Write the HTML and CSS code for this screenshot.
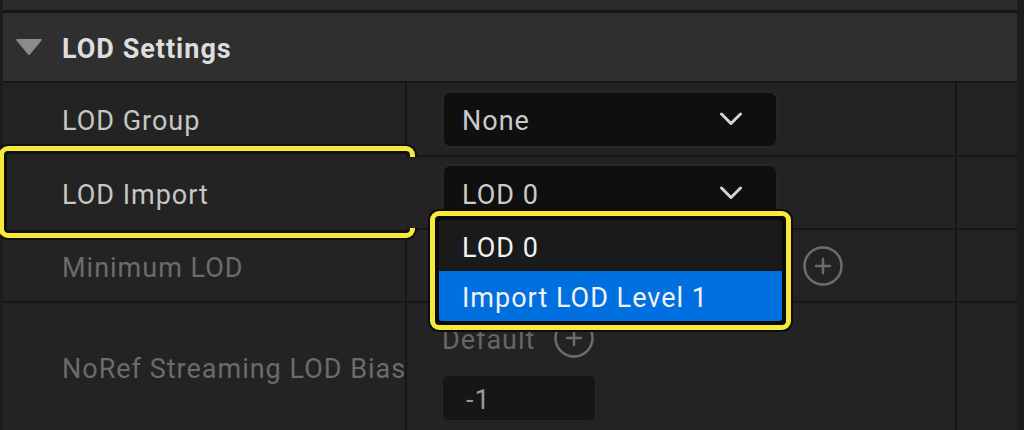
FILE: index.html
```html
<!DOCTYPE html>
<html lang="en">
<head>
	<meta charset="UTF-8">
	<meta name="viewport" content="width=device-width, initial-scale=1.0">
	<title>LOD Settings</title>
	<link rel="stylesheet" href="styles.css">
</head>
<body>
	<div class="panel">
		<div class="topbar"></div>
		<div class="section-head">
			<svg class="caret" width="28" height="18" viewBox="0 0 28 18"><path d="M2 1 H26 Q27.5 1 26.5 2.5 L15 16.5 Q14 17.5 13 16.5 L1.5 2.5 Q0.5 1 2 1 Z" fill="#8b8b8b"/></svg>
			<h2>LOD Settings</h2>
		</div>

		<div class="grid">
			<div class="cell label">LOD Group</div>
			<div class="cell value">
				<div class="combo">
					<span>None</span>
					<svg class="chevron" width="24" height="14" viewBox="0 0 24 14"><polyline points="2.5,2 12,11.5 21.5,2" fill="none" stroke="#d4d4d4" stroke-width="3" stroke-linecap="round" stroke-linejoin="round"/></svg>
				</div>
			</div>
			<div class="cell"></div>

			<div class="cell label marked"><span class="text">LOD Import</span></div>
			<div class="cell value popup-anchor">
				<div class="combo">
					<span>LOD 0</span>
					<svg class="chevron" width="24" height="14" viewBox="0 0 24 14"><polyline points="2.5,2 12,11.5 21.5,2" fill="none" stroke="#d4d4d4" stroke-width="3" stroke-linecap="round" stroke-linejoin="round"/></svg>
				</div>
				<ul class="menu">
					<li>LOD 0</li>
					<li class="selected">Import LOD Level 1</li>
				</ul>
			</div>
			<div class="cell"></div>

			<div class="cell label dim">Minimum LOD</div>
			<div class="cell value">
				<div class="combo"></div>
				<svg class="add" width="40" height="40" viewBox="0 0 40 40"><circle cx="20" cy="20" r="18.5" fill="none" stroke="#6c6c6c" stroke-width="2.5"/><path d="M20 13 V27 M13 20 H27" stroke="#6c6c6c" stroke-width="2.5" stroke-linecap="round"/></svg>
			</div>
			<div class="cell"></div>

			<div class="cell label dim">NoRef Streaming LOD Bias</div>
			<div class="cell value stack">
				<div class="platform">
					<span>Default</span>
					<svg class="add" width="40" height="40" viewBox="0 0 40 40"><circle cx="20" cy="20" r="18.5" fill="none" stroke="#6c6c6c" stroke-width="2.5"/><path d="M20 13 V27 M13 20 H27" stroke="#6c6c6c" stroke-width="2.5" stroke-linecap="round"/></svg>
				</div>
				<div class="number">-1</div>
			</div>
			<div class="cell"></div>
		</div>
	</div>
</body>
</html>
```

FILE: styles.css
```css
html, body { margin: 0; padding: 0; background-color: #1c1c1c; overflow: hidden; }
body { font-family: Roboto, "Liberation Sans", sans-serif; font-size: 27px; letter-spacing: 1px; color: #c6c6c6; }

.panel { margin-left: 3px; width: 1014px; height: 430px; display: flex; flex-direction: column; }
.topbar { height: 10px; background-color: #2b2b2b; border-bottom: 3px solid #161616; }

.section-head {
	height: 70px;
	box-sizing: border-box;
	padding-top: 3px;
	background-color: #2f2f2f;
	border-bottom: 2px solid #171717;
	display: flex;
	align-items: center;
	padding-left: 12px;
}
.section-head .caret { margin-right: 19px; margin-top: -3px; }
.section-head h2 { margin: 0; font-size: 27px; font-weight: bold; color: #dedede; }

.grid {
	flex: 1;
	display: grid;
	grid-template-columns: 402px 548px 60px;
	grid-template-rows: 72px 71px 71px 1fr;
	gap: 2px;
	background-color: #171717;
}
.cell { background-color: #232323; display: flex; align-items: center; }
.label { padding-left: 59px; padding-top: 4px; box-sizing: border-box; white-space: nowrap; }
.label.dim { color: #6b6b6b; }
.value { padding-left: 35px; }

.combo {
	box-sizing: border-box;
	width: 336px;
	height: 57px;
	background-color: #0f0f0f;
	border: 2px solid #262626;
	border-radius: 8px;
	display: flex;
	align-items: center;
	justify-content: space-between;
	padding: 0 33px 0 18px;
	color: #cacaca;
}
.combo span { padding-top: 4px; }

.add { margin-left: 25px; }

/* highlighted label */
.marked { position: relative; }
.marked::before {
	content: "";
	position: absolute;
	left: -4px;
	top: -11px;
	width: 416px;
	height: 92px;
	box-sizing: border-box;
	border: 5px solid #f7e93c;
	border-radius: 9px;
	background-color: #232323;
	box-shadow: 0 0 0 2px #111, inset 0 0 0 3px #111;
}
.marked .text { position: relative; }

/* open dropdown */
.popup-anchor { position: relative; }
.menu {
	position: absolute;
	left: 23px;
	top: 54px;
	width: 361px;
	box-sizing: border-box;
	margin: 0;
	padding: 4px;
	list-style: none;
	background-color: #0c0c0c;
	border: 5px solid #f7e93c;
	border-radius: 9px;
	box-shadow: 0 0 0 2px #0c0c0c;
}
.menu li {
	box-sizing: border-box;
	height: 50px;
	display: flex;
	align-items: center;
	padding: 4px 0 0 23px;
	background-color: #1a1a1a;
	color: #f2f2f2;
}
.menu li:first-child { height: 51px; border-radius: 3px 3px 0 0; }
.menu li.selected { background-color: #0070e0; border-radius: 0 0 3px 3px; }

/* per-platform value */
.stack { flex-direction: column; align-items: flex-start; padding-top: 15px; }
.platform { display: flex; align-items: center; height: 40px; color: #666; }
.platform span { padding-top: 4px; }
.platform .add { margin-left: 19px; }
.number {
	box-sizing: border-box;
	margin-top: 17px;
	width: 154px;
	height: 46px;
	background-color: #161616;
	border: 1px solid #262626;
	border-radius: 6px;
	display: flex;
	align-items: center;
	padding: 4px 0 0 23px;
	color: #999;
}
```
